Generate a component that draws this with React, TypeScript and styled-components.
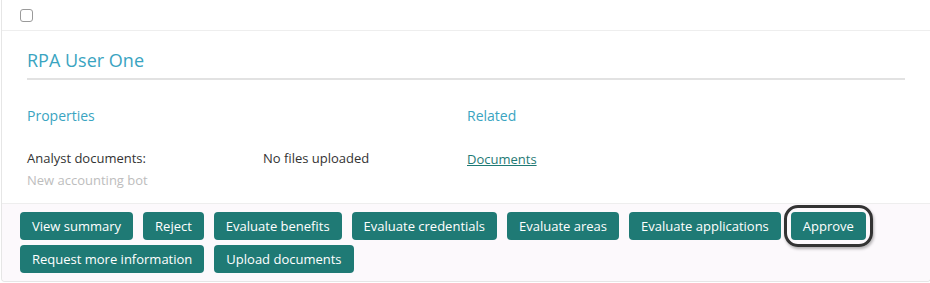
import React from 'react'
import styled, { createGlobalStyle } from 'styled-components'

const colors = {
  teal: '#1f7a75',
  heading: '#3aa4c1',
  text: '#333333',
  muted: '#bdbdbd',
  border: '#e6e6e6',
  footer: '#fcf9fc'
}

const GlobalStyle = createGlobalStyle`
  body {
    margin: 0;
    background: #ffffff;
    font-family: "Open Sans", "Noto Sans", sans-serif;
    color: ${colors.text};
  }
`

const Card = styled.div`
  width: 928px;
  margin-left: 1px;
  border: 1px solid ${colors.border};
  border-top: none;
  border-radius: 0 0 4px 4px;
  background: #ffffff;
`

const SelectBar = styled.div`
  height: 30px;
  display: flex;
  align-items: center;
  padding-left: 18px;
  border-bottom: 1px solid #eeeeee;
`

const CheckBox = styled.span`
  width: 11px;
  height: 11px;
  border: 1px solid #9a9a9a;
  border-radius: 3px;
  background: #ffffff;
`

const Body = styled.div`
  padding: 18px 25px 12px 25px;
`

const Title = styled.h2`
  margin: 0;
  padding-bottom: 7px;
  border-bottom: 2px solid #e2e2e2;
  font-size: 18px;
  line-height: 22px;
  font-weight: 400;
  color: ${colors.heading};
`

const Columns = styled.div`
  display: grid;
  grid-template-columns: 440px 1fr;
  margin-top: 26px;
`

const SectionTitle = styled.h3`
  margin: 0 0 21px;
  font-size: 14px;
  line-height: 20px;
  font-weight: 400;
  color: ${colors.heading};
`

const PropRow = styled.div`
  display: grid;
  grid-template-columns: 236px 1fr;
  font-size: 13px;
  line-height: 22px;
`

const Muted = styled.div`
  font-size: 13px;
  line-height: 22px;
  color: ${colors.muted};
`

const Link = styled.a`
  display: inline-block;
  font-size: 13px;
  line-height: 20px;
  color: ${colors.teal};
  text-decoration: underline;
`

const Footer = styled.div`
  display: flex;
  flex-wrap: wrap;
  gap: 5px 10px;
  padding: 8px 18px 8px 18px;
  border-top: 1px solid #eeeeee;
  background: ${colors.footer};
  border-radius: 0 0 4px 4px;
`

const Button = styled.button<{ $focused?: boolean }>`
  position: relative;
  height: 28px;
  padding: 0 12px;
  border: none;
  border-radius: 4px;
  background: ${colors.teal};
  color: #ffffff;
  font-family: "Open Sans", "Noto Sans", sans-serif;
  font-size: 13px;
  line-height: 28px;
  cursor: pointer;

  ${({ $focused }) => $focused && `
    &::after {
      content: '';
      position: absolute;
      inset: -7px;
      border: 3px solid #333333;
      border-radius: 14px;
      box-shadow: 1px 2px 3px rgba(0, 0, 0, 0.3);
      pointer-events: none;
    }
  `}
`

const actions = [
  'View summary',
  'Reject',
  'Evaluate benefits',
  'Evaluate credentials',
  'Evaluate areas',
  'Evaluate applications',
  'Approve',
  'Request more information',
  'Upload documents'
]

export default function App () {
  return (
    <>
      <GlobalStyle />
      <Card>
        <SelectBar>
          <CheckBox />
        </SelectBar>
        <Body>
          <Title>RPA User One</Title>
          <Columns>
            <div>
              <SectionTitle>Properties</SectionTitle>
              <PropRow>
                <span>Analyst documents:</span>
                <span>No files uploaded</span>
              </PropRow>
              <Muted>New accounting bot</Muted>
            </div>
            <div>
              <SectionTitle>Related</SectionTitle>
              <Link href="#">Documents</Link>
            </div>
          </Columns>
        </Body>
        <Footer>
          {actions.map(label => (
            <Button key={label} $focused={label === 'Approve'}>{label}</Button>
          ))}
        </Footer>
      </Card>
    </>
  )
}
